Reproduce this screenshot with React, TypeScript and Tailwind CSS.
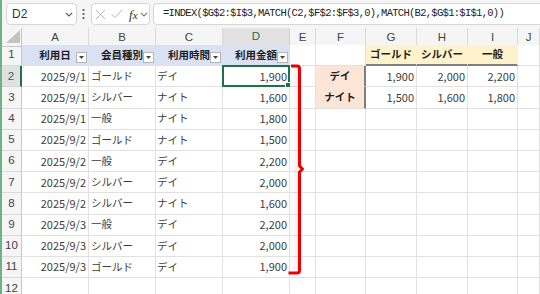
import React from "react";

const FONT = "font-['Noto_Sans_CJK_JP','Noto_Sans',sans-serif]";
const GRID =
  "grid grid-cols-[20px_67px_67px_67px_67px_26px_50px_51px_51px_50px_1fr]";

type Row = [string, string, string, string];
const data: Row[] = [
  ["2025/9/1", "ゴールド", "デイ", "1,900"],
  ["2025/9/1", "シルバー", "ナイト", "1,600"],
  ["2025/9/1", "一般", "ナイト", "1,800"],
  ["2025/9/2", "ゴールド", "ナイト", "1,500"],
  ["2025/9/2", "一般", "デイ", "2,200"],
  ["2025/9/2", "シルバー", "デイ", "2,000"],
  ["2025/9/2", "シルバー", "ナイト", "1,600"],
  ["2025/9/3", "一般", "デイ", "2,200"],
  ["2025/9/3", "シルバー", "デイ", "2,000"],
  ["2025/9/3", "ゴールド", "デイ", "1,900"],
];

const lookup: Record<number, [string, string, string, string]> = {
  2: ["デイ", "1,900", "2,000", "2,200"],
  3: ["ナイト", "1,500", "1,600", "1,800"],
};

const BASE =
  "relative h-full flex items-center overflow-hidden whitespace-nowrap leading-none";
const NUM = "text-[11px]";
const JP = "text-[10.5px]";
const PLAIN = "border-r border-b border-[#e1e1e1] bg-white text-[#3c3c3c]";

function FilterBtn() {
  return (
    <span className="absolute right-[1px] bottom-[2px] w-[11px] h-[11px] bg-white border border-[#b4b4b4] flex items-center justify-center">
      <svg width="5" height="3" viewBox="0 0 5 3">
        <path d="M0 0H5L2.5 3Z" fill="#444" />
      </svg>
    </span>
  );
}

function Chevron({ color = "#555" }: { color?: string }) {
  return (
    <svg width="8" height="5" viewBox="0 0 8 5">
      <path d="M0.8 0.8L4 4L7.2 0.8" fill="none" stroke={color} strokeWidth="1.1" />
    </svg>
  );
}

function Toolbar() {
  return (
    <div className="h-[28px] bg-[#f5f5f5] flex items-center">
      <div className="ml-[4px] w-[71px] h-[22px] bg-white border border-[#d6d6d6] rounded-[4px] flex items-center justify-between pl-[5px] pr-[3px]">
        <span className="text-[12px] text-[#333] font-['Liberation_Sans',sans-serif]">D2</span>
        <Chevron />
      </div>
      <svg className="ml-[5px]" width="3" height="12" viewBox="0 0 3 12">
        <circle cx="1.5" cy="2" r="1.1" fill="#555" />
        <circle cx="1.5" cy="6" r="1.1" fill="#555" />
        <circle cx="1.5" cy="10" r="1.1" fill="#555" />
      </svg>
      <div className="ml-[6px] w-[59px] h-[22px] bg-white border border-[#d6d6d6] rounded-[4px] flex items-center pl-[3px]">
        <svg width="11" height="11" viewBox="0 0 11 11">
          <path d="M1 1L10 10M10 1L1 10" stroke="#b8b8b8" strokeWidth="1" />
        </svg>
        <svg className="ml-[5px]" width="12" height="10" viewBox="0 0 12 10">
          <path d="M0.8 5.2L4 8.6L11.2 0.8" fill="none" stroke="#b8b8b8" strokeWidth="1" />
        </svg>
        <span className="ml-[6px] text-[13px] italic text-[#333] font-['Liberation_Serif',serif] leading-none">
          f<span className="text-[11px]">x</span>
        </span>
        <span className="ml-[2px] flex items-center">
          <Chevron color="#777" />
        </span>
      </div>
      <div className="ml-[3px] flex-1 -mr-[6px] h-[22px] bg-white border border-[#d6d6d6] rounded-[4px] flex items-center pl-[9px]">
        <span className="text-[10.5px] tracking-[-0.71px] text-[#222] font-['Liberation_Mono',monospace] whitespace-nowrap">
          =INDEX($G$2:$I$3,MATCH(C2,$F$2:$F$3,0),MATCH(B2,$G$1:$I$1,0))
        </span>
      </div>
    </div>
  );
}

function HeaderRow() {
  const letters = ["A", "B", "C", "D", "E", "F", "G", "H", "I", "J"];
  return (
    <div className={`${GRID} h-[17px]`}>
      <div className="relative h-full bg-[#f5f5f5] border-r border-b border-r-[#c6c6c6] border-b-[#c6c6c6]">
        <svg className="absolute left-[4px] top-[2px]" width="14" height="13" viewBox="0 0 14 13">
          <path d="M14 0V13H0Z" fill="#c3c3c3" />
        </svg>
      </div>
      {letters.map((l) =>
        l === "D" ? (
          <div
            key={l}
            className="h-full flex items-center justify-center bg-[#e1e1e1] border-r border-r-[#d0d0d0] border-b-2 border-b-[#1e7145] text-[#1e7145] text-[11.5px] font-['Liberation_Sans',sans-serif]"
          >
            {l}
          </div>
        ) : (
          <div
            key={l}
            className="h-full flex items-center justify-center bg-[#f5f5f5] border-r border-b border-r-[#dadada] border-b-[#c6c6c6] text-[#444] text-[11.5px] font-['Liberation_Sans',sans-serif]"
          >
            {l}
          </div>
        )
      )}
    </div>
  );
}

function RowHeader({ n }: { n: number }) {
  if (n === 2) {
    return (
      <div className="h-full flex items-center justify-center bg-[#e1e1e1] border-r-2 border-r-[#1e7145] border-b border-b-[#d6d6d6] text-[#1e7145] text-[11.5px] font-['Liberation_Sans',sans-serif]">
        {n}
      </div>
    );
  }
  return (
    <div className="h-full flex items-center justify-center bg-[#f5f5f5] border-r border-b border-r-[#c6c6c6] border-b-[#dadada] text-[#444] text-[11.5px] font-['Liberation_Sans',sans-serif]">
      {n}
    </div>
  );
}

function Empty() {
  return <div className={`${BASE} ${PLAIN}`} />;
}

function Sheet() {
  const rows: React.ReactNode[] = [];
  rows.push(
    <div key={1} className={`${GRID} h-[21.2px]`}>
      <RowHeader n={1} />
      {["利用日", "会員種別", "利用時間", "利用金額"].map((t) => (
        <div
          key={t}
          className={`${BASE} ${JP} justify-center border-r border-b border-[#d9e1f2] bg-[#d9e1f2] font-bold text-[#1f1f1f]`}
        >
          {t}
          <FilterBtn />
        </div>
      ))}
      <Empty />
      <Empty />
      {["ゴールド", "シルバー", "一般"].map((t) => (
        <div
          key={t}
          className={`${BASE} ${JP} justify-center border-r border-r-[#fff2cc] border-b-2 border-b-[#7f7f7f] bg-[#fff2cc] font-bold text-[#1f1f1f]`}
        >
          {t}
        </div>
      ))}
      <Empty />
    </div>
  );
  for (let r = 2; r <= 12; r++) {
    const d = data[r - 2];
    const lk = lookup[r];
    rows.push(
      <div key={r} className={`${GRID} h-[21.2px]`}>
        <RowHeader n={r} />
        {d ? (
          <>
            <div className={`${BASE} ${NUM} ${PLAIN} justify-end pr-[2px]`}>{d[0]}</div>
            <div className={`${BASE} ${JP} ${PLAIN} pl-[2px]`}>{d[1]}</div>
            <div className={`${BASE} ${JP} ${PLAIN} pl-[1px]`}>{d[2]}</div>
            <div className={`${BASE} ${NUM} ${PLAIN} justify-end pr-[2px] overflow-visible`}>
              {d[3]}
              {r === 2 && (
                <>
                  <span className="absolute -left-[1px] -top-[1.5px] -right-[1px] -bottom-[1px] border-2 border-[#1e7145]" />
                  <span className="absolute -right-[3px] -bottom-[3px] w-[5px] h-[5px] bg-[#1e7145] border border-white box-content" />
                </>
              )}
            </div>
          </>
        ) : (
          <>
            <Empty />
            <Empty />
            <Empty />
            <Empty />
          </>
        )}
        <Empty />
        {lk ? (
          <>
            <div
              className={`${BASE} ${JP} justify-center border-r-2 border-r-[#7f7f7f] border-b ${
                r === 2 ? "border-b-[#fce4d6]" : "border-b-[#e1e1e1]"
              } bg-[#fce4d6] font-bold text-[#1f1f1f]`}
            >
              {lk[0]}
            </div>
            <div className={`${BASE} ${NUM} ${PLAIN} justify-end pr-[2px]`}>{lk[1]}</div>
            <div className={`${BASE} ${NUM} ${PLAIN} justify-end pr-[2px]`}>{lk[2]}</div>
            <div className={`${BASE} ${NUM} ${PLAIN} justify-end pr-[2px]`}>{lk[3]}</div>
          </>
        ) : (
          <>
            <Empty />
            <Empty />
            <Empty />
            <Empty />
          </>
        )}
        <Empty />
      </div>
    );
  }
  return <div>{rows}</div>;
}

export default function App() {
  return (
    <div className={`relative w-[540px] h-[294px] overflow-hidden bg-white border-l-2 border-[#6fb287] ${FONT}`}>
      <Toolbar />
      <HeaderRow />
      <Sheet />
      <svg
        className="absolute -left-[2px] top-0 pointer-events-none"
        width="540"
        height="294"
        viewBox="0 0 540 294"
      >
        <defs>
          <linearGradient id="glow" x1="0" x2="1" y1="0" y2="0">
            <stop offset="0" stopColor="#ff0000" stopOpacity="0" />
            <stop offset="1" stopColor="#ff0000" stopOpacity="0.08" />
          </linearGradient>
        </defs>
        <rect x="292" y="68" width="6" height="203" fill="url(#glow)" />
        <path
          d="M291 66 H297 Q299.5 66 299.5 68.5 V166 L302.5 169 L299.5 172 V270.5 Q299.5 273 297 273 H288.5"
          fill="none"
          stroke="#ee0000"
          strokeWidth="3"
          strokeLinejoin="round"
        />
      </svg>
    </div>
  );
}
